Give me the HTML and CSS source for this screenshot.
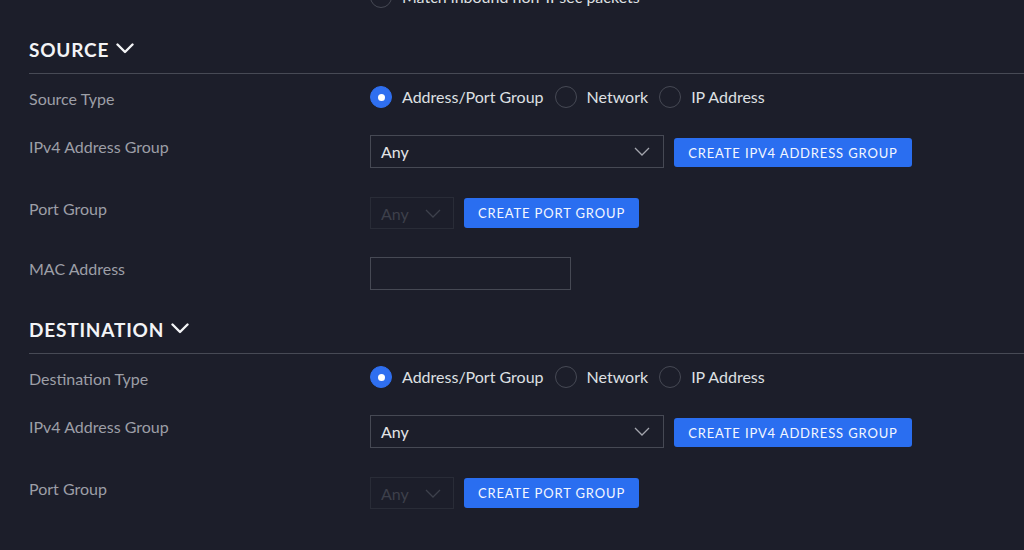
FILE: index.html
```html
<!DOCTYPE html>
<html>
<head>
<meta charset="utf-8">
<link rel="stylesheet" href="styles.css">
</head>
<body>
<div class="page">
  <div class="pre-row">
    <div class="label"></div>
    <div class="radios">
      <label class="radio"><span class="dot"></span><span class="rtext">Match inbound non-IPsec packets</span></label>
    </div>
  </div>

  <section class="section">
    <h2 class="heading">SOURCE <svg class="chev" viewBox="0 0 18 11" width="18" height="11"><polyline points="1.5,1.5 9,9 16.5,1.5"/></svg></h2>
    <div class="rows">
      <div class="row row-type">
        <div class="label">Source Type</div>
        <div class="radios">
          <label class="radio"><span class="dot on"></span><span class="rtext">Address/Port Group</span></label>
          <label class="radio"><span class="dot"></span><span class="rtext">Network</span></label>
          <label class="radio"><span class="dot"></span><span class="rtext">IP Address</span></label>
        </div>
      </div>
      <div class="row row-group">
        <div class="label">IPv4 Address Group</div>
        <div class="controls">
          <div class="select wide"><span>Any</span><svg class="schev" viewBox="0 0 16 9" width="16" height="9"><polyline points="1,1 8,8 15,1"/></svg></div>
          <button class="btn wide-btn">CREATE IPV4 ADDRESS GROUP</button>
        </div>
      </div>
      <div class="row row-port">
        <div class="label">Port Group</div>
        <div class="controls">
          <div class="select small disabled"><span>Any</span><svg class="schev" viewBox="0 0 16 9" width="16" height="9"><polyline points="1,1 8,8 15,1"/></svg></div>
          <button class="btn port-btn">CREATE PORT GROUP</button>
        </div>
      </div>
      <div class="row row-mac">
        <div class="label">MAC Address</div>
        <div class="controls">
          <div class="input"></div>
        </div>
      </div>
    </div>
  </section>

  <section class="section">
    <h2 class="heading">DESTINATION <svg class="chev" viewBox="0 0 18 11" width="18" height="11"><polyline points="1.5,1.5 9,9 16.5,1.5"/></svg></h2>
    <div class="rows">
      <div class="row row-type">
        <div class="label">Destination Type</div>
        <div class="radios">
          <label class="radio"><span class="dot on"></span><span class="rtext">Address/Port Group</span></label>
          <label class="radio"><span class="dot"></span><span class="rtext">Network</span></label>
          <label class="radio"><span class="dot"></span><span class="rtext">IP Address</span></label>
        </div>
      </div>
      <div class="row row-group">
        <div class="label">IPv4 Address Group</div>
        <div class="controls">
          <div class="select wide"><span>Any</span><svg class="schev" viewBox="0 0 16 9" width="16" height="9"><polyline points="1,1 8,8 15,1"/></svg></div>
          <button class="btn wide-btn">CREATE IPV4 ADDRESS GROUP</button>
        </div>
      </div>
      <div class="row row-port">
        <div class="label">Port Group</div>
        <div class="controls">
          <div class="select small disabled"><span>Any</span><svg class="schev" viewBox="0 0 16 9" width="16" height="9"><polyline points="1,1 8,8 15,1"/></svg></div>
          <button class="btn port-btn">CREATE PORT GROUP</button>
        </div>
      </div>
    </div>
  </section>
</div>
</body>
</html>
```

FILE: styles.css
```css
html, body {
  margin: 0;
  padding: 0;
  background: #1c1e2a;
  overflow: hidden;
}
body {
  font-family: Lato, "Open Sans", sans-serif;
  color: #dfe0e3;
  width: 1024px;
  height: 550px;
}
.page {
  padding-left: 29px;
}
.pre-row {
  display: grid;
  grid-template-columns: 341px 1fr;
  margin-top: -14px;
  height: 22px;
}
.section {
  margin-top: 26px;
}
.section + .section {
  margin-top: 24px;
}
.heading {
  margin: 0;
  height: 30px;
  display: flex;
  align-items: center;
  gap: 7px;
  font-size: 19px;
  font-weight: 700;
  letter-spacing: 0.8px;
  color: #f3f4f6;
  border-bottom: 1px solid #474a55;
  box-sizing: content-box;
  padding-bottom: 9px;
}
.chev {
  fill: none;
  stroke: #f3f4f6;
  stroke-width: 2.4;
  stroke-linecap: round;
  stroke-linejoin: round;
  margin-top: -2px;
}
.rows {
  padding-top: 12px;
}
.row {
  display: grid;
  grid-template-columns: 341px 1fr;
  align-items: start;
}
.row-type { height: 49px; }
.row-group { height: 62px; }
.row-port { height: 60px; }
.row-mac { height: 33px; }
.label {
  font-size: 16px;
  line-height: 20px;
  padding-top: 3px;
  color: #9d9fa7;
}
.row-group .label,
.row-port .label,
.row-mac .label {
  padding-top: 2px;
}
.radios {
  display: flex;
  align-items: center;
  gap: 11px;
  height: 22px;
}
.radio {
  display: flex;
  align-items: center;
  gap: 10px;
  font-size: 16px;
  color: #dfe0e3;
}
.rtext {
  margin-top: -2px;
}
.dot {
  width: 22px;
  height: 22px;
  border-radius: 50%;
  box-sizing: border-box;
  border: 1.5px solid #464954;
  display: flex;
  align-items: center;
  justify-content: center;
}
.dot.on {
  background: #2f6ff0;
  border-color: #2f6ff0;
}
.dot.on::after {
  content: "";
  width: 7px;
  height: 7px;
  border-radius: 50%;
  background: #ffffff;
}
.controls {
  display: flex;
  align-items: center;
  gap: 10px;
}
.select {
  box-sizing: border-box;
  border: 1px solid #464954;
  height: 33px;
  display: flex;
  align-items: center;
  justify-content: space-between;
  padding: 0 13px 0 10px;
  font-size: 16px;
  color: #e3e4e7;
}
.select.wide { width: 294px; }
.select.small {
  width: 84px;
  height: 32px;
  padding: 0 12px 0 10px;
}
.select.disabled {
  border-color: #292c37;
  color: #3d404b;
}
.schev {
  fill: none;
  stroke: #a3a5ad;
  stroke-width: 1.3;
}
.select.disabled .schev { stroke: #3d404b; }
.btn {
  font-family: Lato, "Open Sans", sans-serif;
  background: #2a6ef0;
  color: #f4f7ff;
  border: none;
  border-radius: 3px;
  font-size: 13px;
  letter-spacing: 0.85px;
  height: 30px;
  padding: 0;
  cursor: pointer;
}
.wide-btn { width: 238px; height: 29px; margin-top: 2px; }
.port-btn { width: 175px; }
.input {
  box-sizing: border-box;
  width: 201px;
  height: 33px;
  border: 1px solid #464954;
}
```
